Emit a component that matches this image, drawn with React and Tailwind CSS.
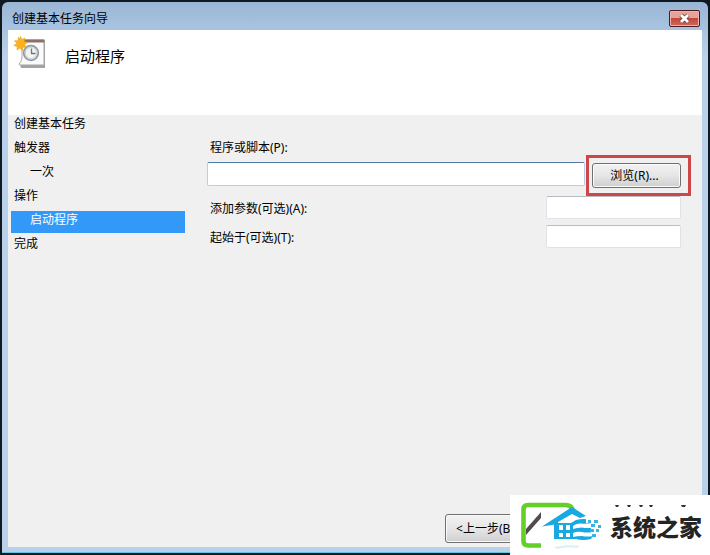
const STEPS = [
  { name: '创建基本任务' },
  { name: '触发器' },
  { name: '一次', nested: true },
  { name: '操作' },
  { name: '启动程序', nested: true, current: true },
  { name: '完成' },
]

const BUTTON =
  'rounded-[3px] border border-[#707070] bg-linear-to-b from-[#f2f2f2] via-[#e6e6e6] to-[#cfcfcf] text-black shadow-[inset_0_0_0_1px_#fafafa]'

function TaskIcon() {
  return (
    <svg className="size-9 shrink-0" viewBox="0 0 36 36" aria-hidden="true">
      <path d="M7 29h23V6l2 1v26H8z" fill="#a3a3a3" />
      <path d="M9 5h22v25H7c-1 0-1-1-1-1 3-3 3-6 3-10z" fill="#fbfbfb" stroke="#a6a6a6" />
      <path d="M10 4.500h21.500v3H10z" fill="#8f6f68" />
      <circle cx="18" cy="18" r="7.300" fill="#f4f5f2" stroke="#929da3" strokeWidth="1.800" />
      <circle cx="18" cy="18" r="5.600" fill="none" stroke="#c9d2d7" strokeWidth="1" />
      <path d="M18.500 13.500v5h4" fill="none" stroke="#6d777c" strokeWidth="1.300" />
      <path d="M7.500 1.500l1.300 3 3.200-1.500-1 3.400 3.500 1.100-3 1.900 2 3-3.600-.2-.6 3.500-2.300-2.700-3 2 .2-3.600L.8 10.500l3-2L1.500 5.700l3.600.1.200-3.500 2 1.500z" fill="#f9b321" stroke="#eda11c" strokeWidth=".6" />
    </svg>
  )
}

function CloseIcon() {
  return (
    <svg className="h-[11px] w-[13px]" viewBox="0 0 13 11" aria-hidden="true">
      <path d="M3 2l7 7M10 2l-7 7" stroke="#6b4448" strokeWidth="4.500" />
      <path d="M3 2l7 7M10 2l-7 7" stroke="#fff" strokeWidth="2.800" />
    </svg>
  )
}

function TitleBar() {
  return (
    <header className="flex h-7 items-end justify-between pr-[2px] pl-1">
      <h1 className="pb-[2px] text-xs leading-[18px]">创建基本任务向导</h1>
      <button
        aria-label="关闭"
        className="mb-[3px] flex h-[17px] w-[31px] items-center justify-center rounded-[2px] border border-[#4e1820] bg-linear-to-b from-[#e5a399] from-45% via-[#c2483a] via-50% to-[#d0675a] shadow-[inset_0_0_0_1px_#eeb4ab]"
      >
        <CloseIcon />
      </button>
    </header>
  )
}

function Steps() {
  return (
    <ol className="flex w-[177px] shrink-0 flex-col gap-[2px] pl-[3px]">
      {STEPS.map((step) => (
        <li
          key={step.name}
          aria-current={step.current ? 'step' : undefined}
          className={`h-[22px] leading-[18px] ${step.nested ? 'pl-[19px]' : 'pl-[3px]'} ${step.current ? 'bg-[#3399f8] text-white' : ''}`}
        >
          {step.name}
        </li>
      ))}
    </ol>
  )
}

function OptionalField({ id, label }) {
  return (
    <div className="flex items-center justify-between">
      <label htmlFor={id} className="pt-[3px] pl-[3px]">{label}</label>
      <input id={id} className="h-[23px] w-[135px] rounded-[2px] border border-[#dfe2e6] border-t-[#b9bcc2] bg-white px-1 outline-none" />
    </div>
  )
}

function ProgramForm() {
  return (
    <form className="flex min-w-0 flex-1 flex-col pt-6 pr-[21px] pl-[22px]">
      <label htmlFor="program" className="pl-[3px] leading-[18px]">程序或脚本(P):</label>
      <div className="mt-[5px] mb-[8px] flex items-start gap-[7px]">
        <input id="program" className="h-[24px] min-w-0 flex-1 rounded-[2px] border border-[#b5cfe7] border-t-[#4d7ba6] bg-white px-1 outline-none" />
        <div className="relative pt-px">
          <button type="button" className={`block h-[25px] w-[89px] pr-1 ${BUTTON}`}>浏览(R)...</button>
          {/* red frame round the browse button */}
          <span className="pointer-events-none absolute -top-[7px] -right-[10px] -bottom-[8px] -left-[6px] border-3 border-[#cd4648]" />
        </div>
      </div>
      <div className="flex flex-col gap-[6px]">
        <OptionalField id="arguments" label="添加参数(可选)(A):" />
        <OptionalField id="start-in" label="起始于(可选)(T):" />
      </div>
    </form>
  )
}

function SiteMark() {
  return (
    <aside className="absolute right-0 bottom-0 flex h-[60px] w-[200px] bg-white">
      <svg className="h-[60px] w-[100px] shrink-0" viewBox="0 0 100 60" aria-hidden="true">
        <path d="M63 15q-2-5-7-5H18q-4.500 0-4.500 4.500v31.500q0 4.500 4.500 4.500h13" fill="none" stroke="#63d02a" strokeWidth="4.600" />
        <path d="M16 34L31 17v6L16 40z" fill="#514b4b" />
        {/* roof, walls and waves */}
        <path d="M32 31.500L62 12l14 9-6 2-8-4-14 8v2z" fill="#18a8e2" />
        <path d="M44 28h17l5-3q8-2 15 0v14q2 3 0 5-8 2-15 0H44z" fill="#18a8e2" />
        <path d="M49 30h4v5h-4zm7 0h4v5h-4zm-7 8h4v4h-4zm7 0h4v4h-4z" fill="#fff" />
        <path d="M63 31q3-3 8-2.500 5 1 12-1v5q-6 1-11 0-5 0-9 1.500zM63 38q4-2 9-1 5 1 11 0v4q-6 1-11 0-5 0-9 1z" fill="#fff" />
        <path d="M76 22h8v6h-8z" fill="#fff" />
        <path d="M78 25h3v3h-3zm6 0h4v3h-4zm-3 4h4v3h-4zm7 1h3v3h-3zm-8 4h4v3h-4zm6 0h3v3h-3zm-4 5h4v3h-4z" fill="#38b3e6" />
        <path d="M44 52q13-3 26-1l-3 2q-10-2-20 1z" fill="#d9f0fa" />
      </svg>
      <div className="pt-[10px]">
        <svg className="h-[3px] w-[92px]" viewBox="0 0 92 3" aria-hidden="true">
          <path d="M5 0h4l-1 2H6zM17 0h4l-1 2h-2zM29 0h4l-1 2h-2zM39 0h4l-1 2h-2zM71 0h5l-1 2h-3z" fill="#333" />
        </svg>
        <p className="mt-[4px] text-[23px] leading-[30px] font-black whitespace-nowrap text-[#242424]">系统之家</p>
      </div>
    </aside>
  )
}

export default function App() {
  return (
    <div className="relative min-h-screen bg-[#101820] p-[2px] font-['Noto_Sans','Noto_Sans_CJK_SC',sans-serif] text-xs text-black">
      <main className="flex min-h-[calc(100vh-4px)] flex-col rounded-t-[6px] border-b border-[#64c4dc] bg-linear-to-b from-[#9ab6d5] to-[#b9d1ea] to-10% px-[6px] pb-[5px]">
        <TitleBar />
        <section className="flex flex-1 flex-col bg-[#f0f0f0]">
          <div className="flex h-[85px] items-start bg-white pt-[5px] pl-[5px]">
            <TaskIcon />
            <h2 className="pt-[9px] pl-4 text-[15px] leading-[24px]">启动程序</h2>
          </div>
          <div className="flex flex-1">
            <Steps />
            <ProgramForm />
          </div>
          <footer className="flex justify-end pr-[177px] pb-1">
            <button className={`h-[29px] w-[80px] ${BUTTON}`}>&lt;上一步(B)</button>
          </footer>
        </section>
      </main>
      <SiteMark />
    </div>
  )
}
